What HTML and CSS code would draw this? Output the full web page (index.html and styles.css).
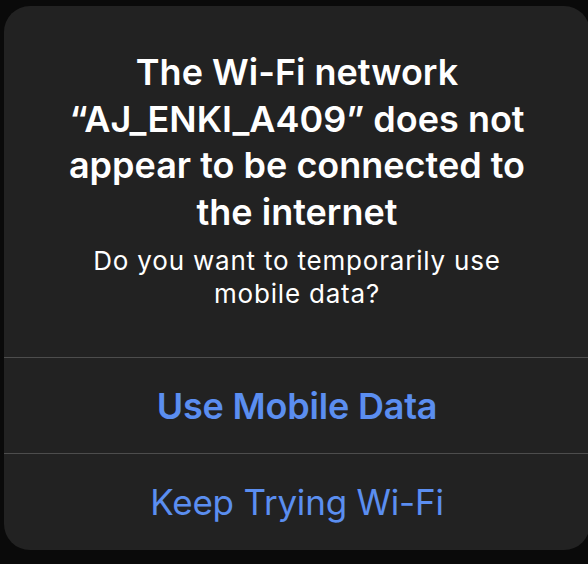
FILE: index.html
```html
<!DOCTYPE html>
<html lang="en">
<head>
  <meta charset="UTF-8">
  <title>Wi-Fi alert</title>
  <link rel="stylesheet" href="styles.css">
</head>
<body>
  <div class="alert">
    <div class="content">
      <h1 class="title">The Wi-Fi network<br>&ldquo;AJ_ENKI_A409&rdquo; does not<br>appear to be connected to<br>the internet</h1>
      <p class="message">Do you want to temporarily use<br>mobile data?</p>
    </div>
    <div class="action primary">Use Mobile Data</div>
    <div class="action">Keep Trying Wi-Fi</div>
  </div>
</body>
</html>
```

FILE: styles.css
```css
* {
  margin: 0;
  padding: 0;
  box-sizing: border-box;
}
html, body {
  width: 588px;
  height: 564px;
  background: #0a0a0a;
  overflow: hidden;
}
body {
  padding: 6px 0 0 4px;
  font-family: Inter, "Noto Sans", sans-serif;
  -webkit-font-smoothing: antialiased;
}
.alert {
  width: 586px;
  height: 544px;
  background: #222222;
  border-radius: 26px;
  display: flex;
  flex-direction: column;
  overflow: hidden;
}
.content {
  height: 351px;
  padding-top: 43px;
  text-align: center;
  color: #fff;
}
.title {
  font-size: 36px;
  font-weight: 600;
  line-height: 46.5px;
}
.message {
  margin-top: 9px;
  font-size: 26px;
  font-weight: 400;
  line-height: 33px;
  letter-spacing: 0.8px;
}
.action {
  height: 96px;
  border-top: 1.5px solid #4d4d4d;
  display: flex;
  align-items: center;
  justify-content: center;
  color: #5b8ef0;
  font-size: 35px;
  font-weight: 400;
  letter-spacing: -0.2px;
}
.action.primary {
  font-size: 36px;
  font-weight: 600;
}
```
